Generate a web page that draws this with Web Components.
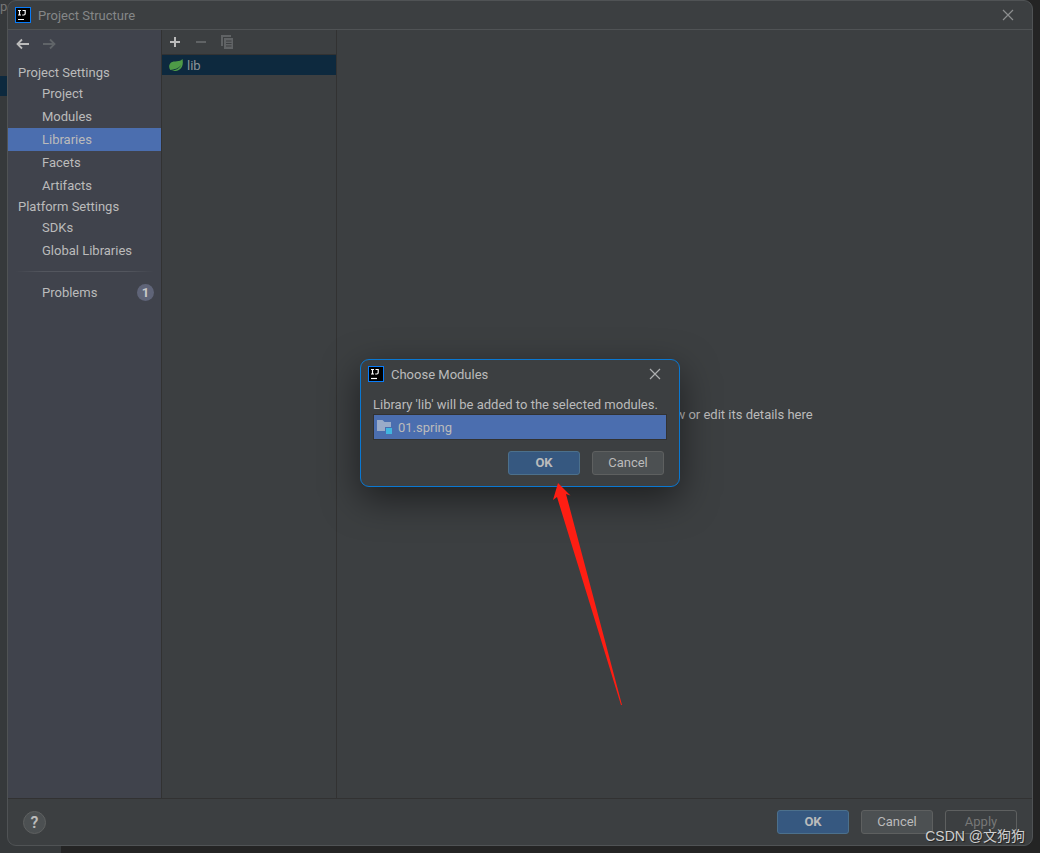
<!DOCTYPE html>
<html lang="en">
<head>
<meta charset="utf-8">
<title>Project Structure</title>
<style>
  body { margin: 0; background: #242424; color: #bbbbbb; font: 13px/19px Roboto, "Noto Sans CJK SC", sans-serif; }
</style>
</head>
<body>
<project-structure></project-structure>
<script>
class BaseElement extends HTMLElement {
  constructor() {
    super();
    this.attachShadow({ mode: "open" }).innerHTML =
      `<style>*{box-sizing:border-box}${this.constructor.css}</style>${this.constructor.html}`;
  }
}

/* Square IntelliJ product mark */
customElements.define("ij-logo", class extends BaseElement {
  static css = `:host{display:block;width:16px;height:16px;flex:none} svg{display:block}`;
  static html = `<svg width="16" height="16" viewBox="0 0 16 16" aria-hidden="true">
    <rect width="16" height="16" fill="#087cfa"/><rect x="1" y="1" width="14" height="14" fill="#000"/>
    <path d="M3 3.500h3M4.500 3.500v4.500M3 8h3M7.500 3.500h2.700v3q0 1.500-1.400 1.500H7.200" stroke="#fff" stroke-width="1.2" fill="none"/>
    <path d="M3 12.500h6" stroke="#fff" stroke-width="1.2"/></svg>`;
});

customElements.define("window-title", class extends BaseElement {
  static css = `:host{display:flex;align-items:center;height:28px;padding:0 17px 0 7px;gap:7px}
    .t{flex:1} button{border:0;padding:0;background:none;color:var(--close,#8c8e8f);width:14px;height:14px}
    svg{display:block}`;
  static html = `<ij-logo></ij-logo><span class="t"><slot></slot></span>
    <button aria-label="Close"><svg width="14" height="14" viewBox="0 0 14 14"><path d="M2 2l10 10M12 2L2 12" stroke="currentColor" stroke-width="1.2"/></svg></button>`;
});

customElements.define("dialog-button", class extends BaseElement {
  static css = `:host{display:block}
    button{display:block;width:72px;height:24px;padding:0;border:1px solid #5e6060;border-radius:3px;background:#4c5052;color:#bbb;font:inherit;line-height:22px}
    :host([primary]) button{background:#365880;border-color:#4c708c;font-weight:700}
    button:disabled{background:none;color:#777}`;
  static html = `<button><slot></slot></button>`;
  connectedCallback() { this.shadowRoot.querySelector("button").disabled = this.hasAttribute("disabled"); }
});

customElements.define("nav-item", class extends BaseElement {
  static css = `:host{display:block}
    a{display:flex;align-items:center;justify-content:space-between;height:23px;padding:0 7px 0 34px;color:inherit;text-decoration:none}
    :host([selected]) a{background:#4b6eaf}
    ::slotted(b){display:block;width:17px;height:17px;border-radius:50%;background:#5f6478;text-align:center;line-height:17px;color:#c8c8c8}`;
  static html = `<a href="#"><span><slot></slot></span><slot name="badge"></slot></a>`;
});

customElements.define("settings-nav", class extends BaseElement {
  static css = `:host{display:block;background:#40434c;border-right:1px solid #323232}
    .history{display:flex;gap:12px;height:33px;padding:7px 8px 0}
    button{border:0;background:none;padding:0;width:14px;height:14px;color:#bbb} button:disabled{color:#606468}
    svg{display:block}
    h2{margin:0;padding-left:10px;font-size:13px;font-weight:400;line-height:19px}
    hr{border:0;height:1px;margin:9px 7px;background:linear-gradient(90deg,transparent,#53565e 20%,#53565e 80%,transparent)}`;
  static html = `<div class="history">
      <button aria-label="Back"><svg width="14" height="14" viewBox="0 0 14 14"><path d="M13 7H1.500M6 2.500L1.500 7 6 11.500" stroke="currentColor" stroke-width="1.8" fill="none"/></svg></button>
      <button aria-label="Forward" disabled><svg width="14" height="14" viewBox="0 0 14 14"><path d="M1 7h11.500M8 2.500L12.500 7 8 11.500" stroke="currentColor" stroke-width="1.8" fill="none"/></svg></button>
    </div>
    <h2>Project Settings</h2>
    <nav-item>Project</nav-item><nav-item>Modules</nav-item><nav-item selected>Libraries</nav-item><nav-item>Facets</nav-item><nav-item>Artifacts</nav-item>
    <h2>Platform Settings</h2>
    <nav-item>SDKs</nav-item><nav-item>Global Libraries</nav-item>
    <hr>
    <nav-item>Problems<b slot="badge">1</b></nav-item>`;
});

customElements.define("library-list", class extends BaseElement {
  static css = `:host{display:block;border-right:1px solid #323232}
    .tools{display:flex;gap:12px;align-items:center;height:25px;padding:0 6px;border-bottom:1px solid #323232}
    button{border:0;background:none;padding:0;width:14px;height:14px;color:#bbb} button:disabled{color:#606365}
    svg{display:block}
    .row{display:flex;align-items:center;gap:4px;height:20px;padding-left:7px;background:#0d293e;color:#8e9498}`;
  static html = `<div class="tools">
      <button aria-label="Add"><svg width="14" height="14" viewBox="0 0 14 14"><path d="M7 2v10M2 7h10" stroke="currentColor" stroke-width="2"/></svg></button>
      <button aria-label="Remove" disabled><svg width="14" height="14" viewBox="0 0 14 14"><path d="M2 7h10" stroke="currentColor" stroke-width="2"/></svg></button>
      <button aria-label="Copy" disabled><svg width="14" height="14" viewBox="0 0 14 14"><path d="M1 11V0h10v2H3v9zM4 3h9v11H4zM6 5.500v1h5.500v-1zM6 8v1h5.500V8zM6 10.500v1h5.500v-1z" fill="currentColor" fill-rule="evenodd"/></svg></button>
    </div>
    <div class="row"><svg width="14" height="14" viewBox="0 0 14 14" aria-hidden="true"><path d="M13.500 1c.8 4.500.3 8-3 10.500-2.500 1.800-6 1.800-8.500 1 4 0 8-1.500 10-5.500-2.500 3.500-6.500 4.500-10.700 5C-.5 9.500-.2 6.500 2 4.500 5 2.500 11 4.500 13.500 1z" fill="#4e9a47"/></svg><span>lib</span></div>`;
});

customElements.define("module-chooser", class extends BaseElement {
  static css = `:host{display:block;width:320px;height:128px;border:1px solid #0a78d2;border-radius:9px;background:#3c3f41;box-shadow:0 12px 36px rgba(0,0,0,.5);--close:#adafb0}
    .body{padding:7px 12px 0} p{margin:0;white-space:nowrap}
    .list{display:flex;align-items:center;gap:5px;height:26px;padding-left:3px;border:1px solid #323232;background:#4b6eaf}
    .actions{display:flex;justify-content:flex-end;gap:12px;padding:11px 3px 0 0}
    svg{display:block}
    .pointer{position:absolute;left:190px;top:122px}`;
  static html = `<window-title>Choose Modules</window-title>
    <div class="body"><p>Library 'lib' will be added to the selected modules.</p>
      <div class="list"><svg width="16" height="16" viewBox="0 0 16 16" aria-hidden="true"><path d="M0 1h5.500l2 2H14v5H8v4H0z" fill="#9aabc8"/><path d="M9 9h6v6H9z" fill="#40b6e0"/></svg><span>01.spring</span></div>
      <div class="actions"><dialog-button primary>OK</dialog-button><dialog-button>Cancel</dialog-button></div></div>
    <svg class="pointer" width="74" height="226" viewBox="0 0 74 226" aria-hidden="true"><path d="M7 1l12.500 12.500-4.500-1.500L71 223h-1L6 15l-4 3z" fill="#fe1e13"/></svg>`;
});

customElements.define("project-structure", class extends BaseElement {
  static css = `:host{display:block;position:relative;min-height:100vh;padding:0 7px 7px;background:linear-gradient(90deg,#36393b 61px,#242424 61px)}
    .edge{position:absolute;left:0;top:76px;width:7px;height:20px;background:#0d293e}
    .peek{position:absolute;left:0;top:-3px;width:7px;overflow:hidden;color:#777}
    main{position:relative;display:flex;flex-direction:column;min-height:calc(100vh - 7px);border:1px solid #505355;border-radius:9px;background:#3c3f41;overflow:hidden}
    .head{height:29px;color:#858788;border-bottom:1px solid #505355}
    .panes{flex:1;display:grid;grid-template-columns:154px 175px 1fr}
    .detail{display:flex;align-items:center;justify-content:center}
    footer{display:flex;align-items:center;gap:12px;height:47px;padding:0 15px;border-top:1px solid #323232}
    .help{width:23px;height:23px;margin-right:auto;padding:0;border:1px solid #5e6060;border-radius:50%;background:#4c5052;color:#bbb;font:inherit;font-size:16px;font-weight:600;line-height:21px}
    module-chooser{position:absolute;inset:0;margin:auto}
    .mark{position:absolute;right:15px;bottom:13px;font:14px/22px "Liberation Sans","Noto Sans CJK SC",sans-serif;color:#d0d0d0;text-shadow:1px 1px 1px #222}`;
  static html = `<span class="peek">p</span><div class="edge"></div>
    <main><window-title class="head">Project Structure</window-title>
      <div class="panes"><settings-nav></settings-nav><library-list></library-list><section class="detail">Select a library to view or edit its details here</section></div>
      <footer><button class="help" aria-label="Help">?</button><dialog-button primary>OK</dialog-button><dialog-button>Cancel</dialog-button><dialog-button disabled>Apply</dialog-button></footer>
      <module-chooser></module-chooser>
    </main>
    <div class="mark">CSDN @文狗狗</div>`;
});
</script>
</body>
</html>
